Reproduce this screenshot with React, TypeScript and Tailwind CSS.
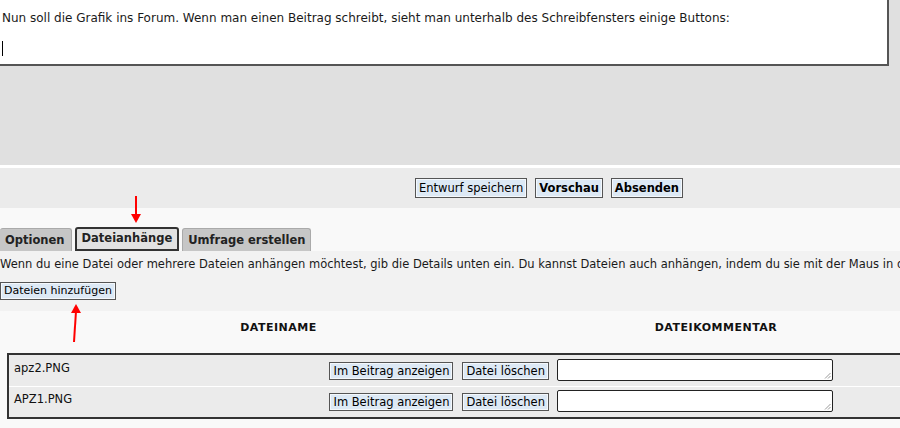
import React from 'react';

const font = "font-['DejaVu_Sans','Liberation_Sans',sans-serif]";

type BtnProps = { label: string; bold?: boolean; size?: 'bar' | 'add' | 'row' };

const sizes = {
  bar: 'h-[20px] text-[11.5px] leading-[18px]',
  add: 'h-[18px] text-[11px] leading-[16px]',
  row: 'h-[18px] text-[11.5px] leading-[16px]',
};

const Btn = ({ label, bold = false, size = 'bar' }: BtnProps) => (
  <button
    className={`px-[3px] border border-[#555] bg-[#dde9f5] text-black shadow-[inset_0_0_0_1px_#f4f8fc] ${sizes[size]} ${
      bold ? 'font-bold' : ''
    }`}
  >
    {label}
  </button>
);

const ArrowDown = ({ className }: { className: string }) => (
  <svg className={className} width="12" height="28" viewBox="0 0 12 28">
    <line x1="6" y1="0" x2="6" y2="20" stroke="#f00" strokeWidth="2" />
    <polygon points="1,18 11,18 6,27" fill="#f00" />
  </svg>
);

const ArrowUp = ({ className }: { className: string }) => (
  <svg className={className} width="14" height="40" viewBox="0 0 14 40">
    <line x1="6" y1="39" x2="8" y2="8" stroke="#f00" strokeWidth="2" />
    <polygon points="3,10 13,10 8,1" fill="#f00" />
  </svg>
);

const files = ['apz2.PNG', 'APZ1.PNG'];

export default function App() {
  return (
    <div className={`relative w-[900px] h-[428px] overflow-hidden bg-[#f9f9f9] text-[#222] ${font}`}>
      {/* Editor */}
      <div className="bg-[#e0e0e0] h-[165px]">
        <div className="h-[66px] w-[889px] bg-white border-r-2 border-b-2 border-[#555] pl-[2px] pt-[9px]">
          <p className="text-[12px] leading-[18px] text-[#1a1a1a]">
            Nun soll die Grafik ins Forum. Wenn man einen Beitrag schreibt, sieht man unterhalb des Schreibfensters einige Buttons:
          </p>
          <div className="mt-[14px] h-[15px] w-px bg-black" />
        </div>
      </div>

      {/* Submit bar */}
      <div className="border-t-[3px] border-white bg-[#ebebeb] h-[43px] flex items-center justify-center gap-[8px] pl-[198px]">
        <Btn label="Entwurf speichern" />
        <Btn label="Vorschau" bold />
        <Btn label="Absenden" bold />
      </div>

      {/* Tabs */}
      <div className="flex items-end gap-[3px] mt-[19px] h-[24px]">
        <div className="h-[23px] pl-[5px] pr-[6px] rounded-t-[3px] bg-[#c6c6c6] border-t border-r border-[#aaa] text-[11.5px] font-bold leading-[23px] text-[#222]">
          Optionen
        </div>
        <div className="h-[24px] px-[5px] rounded-t-[3px] bg-[#e2e2e2] border-2 border-[#333] text-[11.5px] font-bold leading-[18px] text-[#222]">
          Dateianhänge
        </div>
        <div className="h-[23px] px-[5px] rounded-t-[3px] bg-[#c6c6c6] border-t border-x border-[#aaa] text-[11.5px] font-bold leading-[23px] text-[#222]">
          Umfrage erstellen
        </div>
      </div>

      {/* Attachment panel */}
      <div className="bg-[#f2f2f2] h-[60px] pt-[6px]">
        <p className="text-[11.5px] leading-[15px] whitespace-nowrap text-[#1a1a1a]">
          Wenn du eine Datei oder mehrere Dateien anhängen möchtest, gib die Details unten ein. Du kannst Dateien auch anhängen, indem du sie mit der Maus in das Nachrichtenfenster ziehst.
        </p>
        <div className="mt-[5px]">
          <Btn label="Dateien hinzufügen" size="add" />
        </div>
      </div>

      {/* File table */}
      <div className="rounded-tl-[5px] bg-[#f9f9f9] ml-[1px] pt-[9px]">
        <div className="grid grid-cols-[555px_320px] text-[11px] font-bold tracking-[0.5px] text-[#111] h-[33px]">
          <div className="text-center">DATEINAME</div>
          <div className="text-center">DATEIKOMMENTAR</div>
        </div>
        <div className="ml-[6px] w-[920px] border-2 border-[#333] bg-[#ebebeb]">
          {files.map((f, i) => (
            <div
              key={f}
              className={`grid grid-cols-[540px_1fr] items-center h-[31px] ${i > 0 ? 'border-t border-white' : ''}`}
            >
              <div className="flex items-center justify-between pl-[5px]">
                <span className="text-[11.5px] text-[#111] -mt-[4px]">{f}</span>
                <div className="flex gap-[9px]">
                  <Btn label="Im Beitrag anzeigen" size="row" />
                  <Btn label="Datei löschen" size="row" />
                </div>
              </div>
              <div className="pl-[8px] -mt-[2px]">
                <div className="relative w-[276px] h-[22px] bg-white border border-[#222] rounded-[2px]">
                  <svg className="absolute right-[1px] bottom-[1px]" width="7" height="7" viewBox="0 0 7 7">
                    <line x1="1" y1="6.5" x2="6.5" y2="1" stroke="#999" />
                    <line x1="4" y1="6.5" x2="6.5" y2="4" stroke="#999" />
                  </svg>
                </div>
              </div>
            </div>
          ))}
        </div>
      </div>

      <ArrowDown className="absolute left-[130px] top-[196px]" />
      <ArrowUp className="absolute left-[68px] top-[303px]" />
    </div>
  );
}
